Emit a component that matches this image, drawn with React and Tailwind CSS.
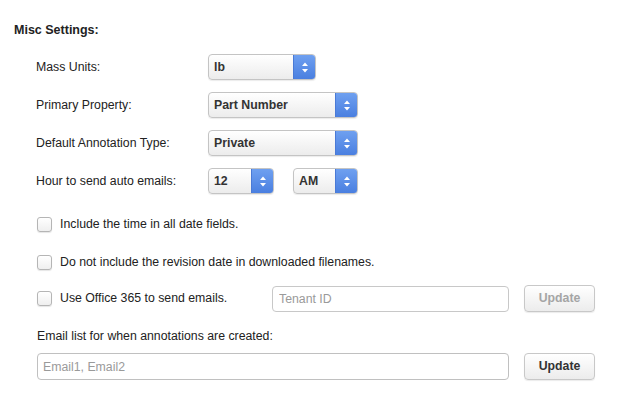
import React from 'react';

const Arrows = () => (
  <svg width="8" height="11" viewBox="0 0 8 11" fill="#fff">
    <path d="M4 0.5 L7 4 L1 4 Z" />
    <path d="M1 7 L7 7 L4 10.5 Z" />
  </svg>
);

const Select = ({ value, width }) => (
  <div
    className={`flex h-[26px] rounded-[4px] border border-[#c4c4c4] bg-gradient-to-b from-white to-[#ececec] overflow-hidden shadow-[0_1px_1px_rgba(0,0,0,0.08)] ${width}`}
  >
    <div className="flex-1 flex items-center pl-[5px] font-bold text-[12.3px] text-[#333]">{value}</div>
    <div className="w-[22px] flex items-center justify-center bg-gradient-to-b from-[#6fa0f0] to-[#4a7fe0] border-l border-[#4a7ad6]">
      <Arrows />
    </div>
  </div>
);

const Checkbox = () => (
  <div className="w-[15px] h-[15px] rounded-[3px] border border-[#b5b5b5] bg-gradient-to-b from-white to-[#efefef] shadow-[0_1px_1px_rgba(0,0,0,0.1)] shrink-0" />
);

const Button = ({ disabled }) => (
  <button
    className={`w-[71px] h-[27px] rounded-[4px] border border-[#c8c8c8] bg-gradient-to-b from-white to-[#ececec] font-bold text-[12.3px] shadow-[0_1px_1px_rgba(0,0,0,0.08)] ${disabled ? 'text-[#a5a5a5]' : 'text-[#333]'}`}
  >
    Update
  </button>
);

const Row = ({ label, children }) => (
  <div className="flex items-center h-[26px]">
    <div className="w-[172px] text-[12.3px] text-[#222]">{label}</div>
    {children}
  </div>
);

export default function App() {
  return (
    <div className="w-[620px] h-[398px] bg-white pl-[14px] pt-[22px] font-['Liberation_Sans',Arial,sans-serif] text-[#222]">
      <div className="font-bold text-[12.5px] leading-[16px] h-[16px]">Misc Settings:</div>

      <div className="pl-[22px] mt-[16px] flex flex-col gap-[12px]">
        <Row label="Mass Units:">
          <Select value="lb" width="w-[108px]" />
        </Row>
        <Row label="Primary Property:">
          <Select value="Part Number" width="w-[150px]" />
        </Row>
        <Row label="Default Annotation Type:">
          <Select value="Private" width="w-[150px]" />
        </Row>
        <Row label="Hour to send auto emails:">
          <Select value="12" width="w-[66px]" />
          <div className="ml-[19px]">
            <Select value="AM" width="w-[65px]" />
          </div>
        </Row>
      </div>

      <div className="pl-[23px] text-[12.3px]">
        <div className="flex items-center gap-[8px] mt-[23px] h-[15px]">
          <Checkbox />
          <span>Include the time in all date fields.</span>
        </div>
        <div className="flex items-center gap-[8px] mt-[23px] h-[15px]">
          <Checkbox />
          <span>Do not include the revision date in downloaded filenames.</span>
        </div>
        <div className="flex items-center mt-[15px] h-[27px]">
          <div className="flex items-center gap-[8px] w-[235px]">
            <Checkbox />
            <span>Use Office 365 to send emails.</span>
          </div>
          <input
            placeholder="Tenant ID"
            className="w-[237px] h-[26px] rounded-[4px] border border-[#c8c8c8] px-[6px] text-[12.3px] placeholder:text-[#9a9a9a] outline-none"
          />
          <div className="ml-[15px]">
            <Button disabled />
          </div>
        </div>
        <div className="mt-[17px] leading-[14px]">Email list for when annotations are created:</div>
        <div className="flex items-center mt-[10px] h-[27px]">
          <input
            placeholder="Email1, Email2"
            className="w-[472px] h-[27px] rounded-[4px] border border-[#c0c0c0] px-[5px] text-[12.3px] placeholder:text-[#9a9a9a] outline-none"
          />
          <div className="ml-[15px]">
            <Button />
          </div>
        </div>
      </div>
    </div>
  );
}
